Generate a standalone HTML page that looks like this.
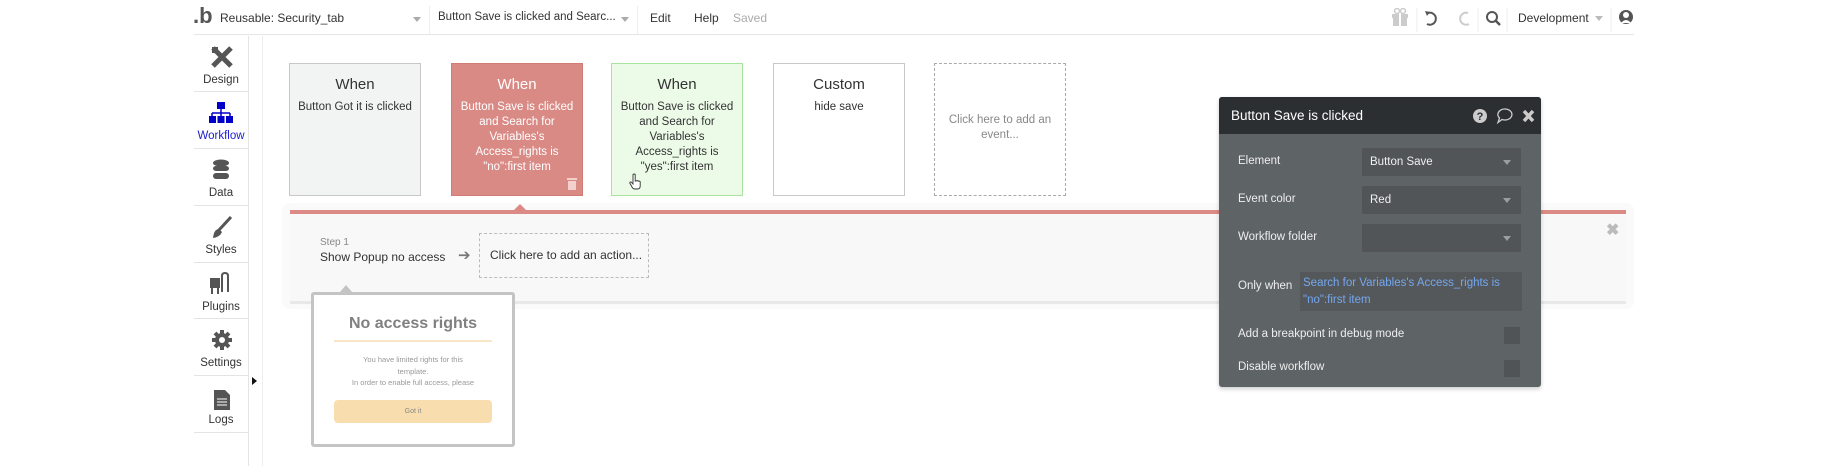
<!DOCTYPE html>
<html><head><meta charset="utf-8"><style>
*{margin:0;padding:0;box-sizing:border-box}
body{width:1830px;height:466px;background:#fff;font-family:"Liberation Sans",sans-serif;position:relative;overflow:hidden;color:#333}
.a{position:absolute}
.t{position:absolute;white-space:nowrap}
.card{position:absolute;top:63px;width:132px;height:133px;border:1px solid #c8c8c8;text-align:center;font-size:11.5px;line-height:15px}
.card .w{font-size:15px;margin-top:12px;margin-bottom:6px;line-height:18px}
.side{position:absolute;left:194px;width:54px;text-align:center;font-size:11.5px;color:#333}
.sep{position:absolute;left:194px;width:54px;height:1px;background:#e4e4e4}
.lbl{position:absolute;left:1238px;font-size:11.5px;color:#eee}
.dd{position:absolute;left:1362px;width:159px;height:28px;background:#515558;color:#f0f0f0;font-size:11.5px;padding:8px 0 0 8px}
.dd:after{content:"";position:absolute;right:10px;top:12px;border:4px solid transparent;border-top:5px solid #9a9ea1}
</style></head><body>
<!-- top bar -->
<div class="a" style="left:194px;top:0;width:1440px;height:35px;border-bottom:1px solid #e6e6e6"></div>
<div class="t" style="left:193px;top:3px;font-size:22px;color:#555;font-weight:bold">.b</div>
<div class="t" style="left:220px;top:11px;font-size:12px;color:#333">Reusable: Security_tab</div>
<div class="a" style="left:413px;top:17px;border:4px solid transparent;border-top:5px solid #aaa"></div>
<div class="a" style="left:429px;top:6px;width:1px;height:28px;background:#eee"></div>
<div class="t" style="left:438px;top:11px;font-size:11.5px;color:#333">Button Save is clicked and Searc...</div>
<div class="a" style="left:621px;top:17px;border:4px solid transparent;border-top:5px solid #aaa"></div>
<div class="a" style="left:637px;top:6px;width:1px;height:28px;background:#eee"></div>
<div class="t" style="left:650px;top:11px;font-size:12px;color:#333">Edit</div>
<div class="t" style="left:694px;top:11px;font-size:12px;color:#333">Help</div>
<div class="t" style="left:733px;top:11px;font-size:12px;color:#aaa">Saved</div>
<svg class="a" style="left:1390px;top:8px" width="250" height="24">
<rect x="2" y="6" width="16" height="4" fill="#ccc"/><rect x="3" y="10" width="14" height="8" fill="#ccc"/><rect x="9" y="6" width="2" height="12" fill="#fff"/><circle cx="7" cy="3" r="2.5" fill="none" stroke="#ccc" stroke-width="1.5"/><circle cx="13" cy="3" r="2.5" fill="none" stroke="#ccc" stroke-width="1.5"/>
<line x1="27" y1="0" x2="27" y2="24" stroke="#eee"/>
<path d="M38 5 A6 6 0 1 1 37 16" fill="none" stroke="#555" stroke-width="2"/><path d="M35 3 l5 1 -3 4z" fill="#555"/>
<path d="M78 5 A6 6 0 1 0 79 16" fill="none" stroke="#ccc" stroke-width="2"/>
<line x1="88" y1="0" x2="88" y2="24" stroke="#eee"/>
<circle cx="102" cy="9" r="5" fill="none" stroke="#555" stroke-width="2"/><line x1="106" y1="13" x2="110" y2="17" stroke="#555" stroke-width="2.5"/>
<line x1="117" y1="0" x2="117" y2="24" stroke="#eee"/>
<text x="128" y="14" font-size="12" fill="#333" font-family="Liberation Sans">Development</text>
<path d="M205 8 l8 0 -4 5z" fill="#bbb"/>
<line x1="221" y1="0" x2="221" y2="24" stroke="#eee"/>
<circle cx="236" cy="9" r="7" fill="#555"/><circle cx="236" cy="7" r="3" fill="#fff"/><path d="M231 15 q5 -6 10 0z" fill="#fff"/>
</svg>
<!-- sidebar -->
<div class="a" style="left:248px;top:36px;width:1px;height:430px;background:#e4e4e4"></div>
<div class="a" style="left:262px;top:36px;width:1px;height:430px;background:#eee"></div>
<svg class="a" style="left:210px;top:45px" width="24" height="24"><path d="M3 3 l18 18 M21 3 l-18 18" stroke="#555" stroke-width="5"/><rect x="2" y="2" width="6" height="6" fill="#555"/></svg>
<div class="side" style="top:74px">Design</div>
<div class="sep" style="top:91px"></div>
<svg class="a" style="left:208px;top:102px" width="26" height="22"><rect x="9" y="0" width="8" height="7" fill="#0000c8"/><path d="M13 7v4M4 11h18M4 11v3M13 11v3M22 11v3" stroke="#0000c8" stroke-width="1.5"/><rect x="1" y="14" width="7" height="7" fill="#0000c8"/><rect x="9.5" y="14" width="7" height="7" fill="#0000c8"/><rect x="18" y="14" width="7" height="7" fill="#0000c8"/></svg>
<div class="side" style="top:130px;color:#2020d0">Workflow</div>
<div class="sep" style="top:148px"></div>
<svg class="a" style="left:211px;top:159px" width="20" height="22"><ellipse cx="10" cy="4" rx="8" ry="3.5" fill="#555"/><rect x="2" y="7" width="16" height="5" rx="3" fill="#555"/><rect x="2" y="14" width="16" height="6" rx="3" fill="#555"/></svg>
<div class="side" style="top:187px">Data</div>
<div class="sep" style="top:205px"></div>
<svg class="a" style="left:211px;top:216px" width="22" height="24"><path d="M20 1 L8 14" stroke="#555" stroke-width="3"/><path d="M8 13 q-5 0 -6 9 q7 -1 9 -6z" fill="#555"/></svg>
<div class="side" style="top:244px">Styles</div>
<div class="sep" style="top:262px"></div>
<svg class="a" style="left:208px;top:272px" width="24" height="24"><rect x="2" y="6" width="10" height="10" fill="#555"/><path d="M4 16v6M10 16v6" stroke="#555" stroke-width="2"/><path d="M14 20 V4 q0 -3 3 -3 q3 0 3 3 V20" fill="none" stroke="#555" stroke-width="2"/></svg>
<div class="side" style="top:301px">Plugins</div>
<div class="sep" style="top:318px"></div>
<svg class="a" style="left:211px;top:329px" width="22" height="22"><circle cx="11" cy="11" r="7" fill="#555"/><path d="M11 1v20M1 11h20M4 4l14 14M18 4L4 18" stroke="#555" stroke-width="4"/><circle cx="11" cy="11" r="3" fill="#fff"/></svg>
<div class="side" style="top:357px">Settings</div>
<div class="sep" style="top:375px"></div>
<div class="a" style="left:252px;top:377px;border:4px solid transparent;border-left:5px solid #111"></div>
<svg class="a" style="left:213px;top:389px" width="18" height="22"><path d="M1 1h11l5 5v15H1z" fill="#555"/><path d="M4 10h10M4 13h10M4 16h10" stroke="#fff" stroke-width="1"/></svg>
<div class="side" style="top:414px">Logs</div>
<div class="sep" style="top:432px"></div>
<!-- cards -->
<div class="card" style="left:289px;background:#f2f3f3"><div class="w">When</div>Button Got it is clicked</div>
<div class="card" style="left:451px;background:#d98a85;border-color:#d27a74;color:#fff"><div class="w">When</div>Button Save is clicked<br>and Search for<br>Variables's<br>Access_rights is<br>"no":first item
<svg class="a" style="left:115px;top:113px" width="10" height="13"><rect x="0" y="1" width="10" height="2" fill="#f3d0cd"/><rect x="1" y="4" width="8" height="9" fill="#f3d0cd"/></svg></div>
<div class="card" style="left:611px;background:#ecfbe8;border-color:#a8e4a0"><div class="w">When</div>Button Save is clicked<br>and Search for<br>Variables's<br>Access_rights is<br>"yes":first item</div>
<svg class="a" style="left:629px;top:173px" width="12" height="17"><path d="M4 1.5 q1.2 -1 2.2 0 V8 h1 q1.2 -0.8 2 0.2 q1.2 -0.6 2 0.5 V13 q0 3 -3 3 H6 q-2 0 -3 -2 L0.8 10 q0 -1.3 1.3 -1 L4 11z" fill="#fff" stroke="#333" stroke-width="0.9"/></svg>
<div class="card" style="left:773px;background:#fff"><div class="w">Custom</div>hide save</div>
<div class="card" style="left:934px;background:#fff;border:1px dashed #aaa;color:#888;padding-top:49px">Click here to add an<br>event...</div>
<!-- workflow strip -->
<div class="a" style="left:282px;top:203px;width:1352px;height:106px;background:#fafafa;border-radius:8px"></div>
<div class="a" style="left:290px;top:210px;width:1336px;height:91px;background:#f8f8f8;border-top:4px solid #dc8a85;box-shadow:0 3px 0 #e8e8e8"></div>
<div class="a" style="left:514px;top:204px;border:6px solid transparent;border-bottom:6px solid #dc8a85;border-top:0"></div>
<div class="t" style="left:1606px;top:220px;font-size:16px;color:#bbb;font-weight:bold">✖</div>
<div class="t" style="left:320px;top:237px;font-size:10px;color:#888">Step 1</div>
<div class="t" style="left:320px;top:250px;font-size:12px;color:#333">Show Popup no access</div>
<div class="t" style="left:458px;top:246px;font-size:15px;color:#777">➔</div>
<div class="a" style="left:479px;top:233px;width:170px;height:45px;border:1px dashed #bbb"></div>
<div class="t" style="left:490px;top:248px;font-size:12px;color:#333">Click here to add an action...</div>
<!-- popup preview -->
<div class="a" style="left:340px;top:285px;border:6px solid transparent;border-bottom:7px solid #c4c4c4;border-top:0"></div>
<div class="a" style="left:311px;top:292px;width:204px;height:155px;border:3px solid #c4c4c4;border-radius:3px;background:#fff"></div>
<div class="t" style="left:311px;width:204px;text-align:center;top:315px;font-size:16px;font-weight:bold;color:#808080">No access rights</div>
<div class="a" style="left:334px;top:340px;width:158px;height:2px;background:#f8e6c6"></div>
<div class="t" style="left:311px;width:204px;text-align:center;top:354px;font-size:7.5px;color:#999;line-height:11.5px">You have limited rights for this<br>template.<br>In order to enable full access, please</div>
<div class="a" style="left:334px;top:400px;width:158px;height:23px;background:#f8deae;border-radius:4px;font-size:7px;color:#888;text-align:center;line-height:23px">Got it</div>
<!-- property panel -->
<div class="a" style="left:1219px;top:97px;width:322px;height:290px;background:#5e6366;border-radius:3px;box-shadow:0 2px 4px rgba(0,0,0,.2)"></div>
<div class="a" style="left:1219px;top:97px;width:322px;height:37px;background:#2c2f31;border-radius:3px 3px 0 0"></div>
<div class="t" style="left:1231px;top:108px;font-size:13.5px;color:#fff">Button Save is clicked</div>
<svg class="a" style="left:1472px;top:107px" width="66" height="18"><circle cx="8" cy="9" r="7" fill="#ccc"/><text x="8" y="13" font-size="11" font-weight="bold" text-anchor="middle" fill="#2c2f31" font-family="Liberation Sans">?</text><path d="M33 2 a7 5.5 0 1 1 -3 10.5 l-4 3 1.5 -4.5 a7 5.5 0 0 1 5.5 -9z" fill="none" stroke="#ccc" stroke-width="1.3"/><path d="M52 4 l9 10 M61 4 l-9 10" stroke="#ccc" stroke-width="3.5"/></svg>
<div class="lbl" style="top:155px">Element</div>
<div class="dd" style="top:148px">Button Save</div>
<div class="lbl" style="top:193px">Event color</div>
<div class="dd" style="top:186px">Red</div>
<div class="lbl" style="top:231px">Workflow folder</div>
<div class="dd" style="top:224px"></div>
<div class="lbl" style="top:280px">Only when</div>
<div class="a" style="left:1300px;top:272px;width:222px;height:39px;background:#54585b;color:#74a7ee;font-size:11.5px;line-height:16.5px;padding:3px 0 0 3px">Search for Variables's Access_rights is<br>"no":first item</div>
<div class="lbl" style="top:328px">Add a breakpoint in debug mode</div>
<div class="a" style="left:1504px;top:327px;width:16px;height:17px;background:#505457"></div>
<div class="lbl" style="top:361px">Disable workflow</div>
<div class="a" style="left:1504px;top:360px;width:16px;height:17px;background:#505457"></div>
</body></html>
